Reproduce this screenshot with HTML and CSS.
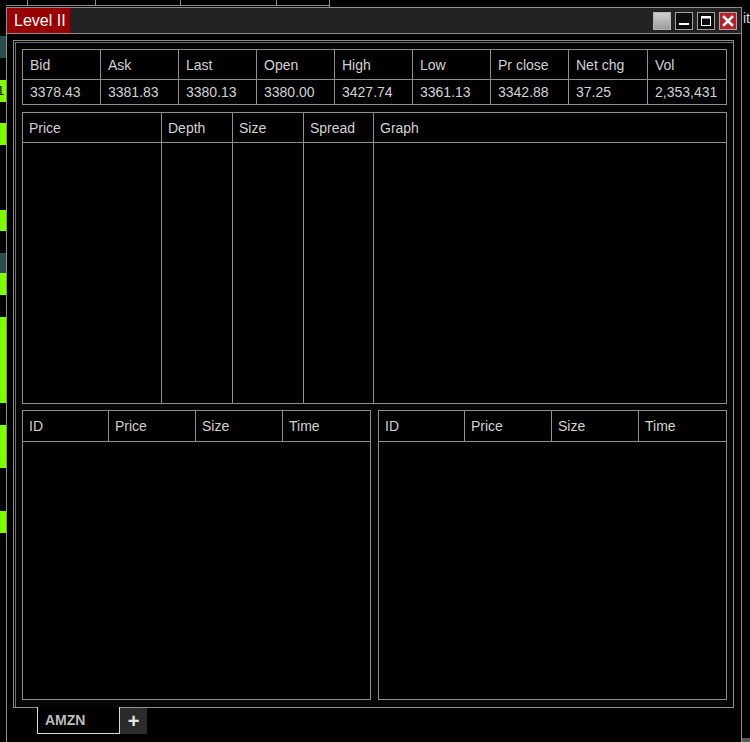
FILE: index.html
```html
<!DOCTYPE html>
<html>
<head>
<meta charset="utf-8">
<link rel="stylesheet" href="styles.css">
</head>
<body>
<div class="desk">
  <div class="bg-top">
    <div class="bg-cols">
      <div class="bg-col c1"></div>
      <div class="bg-col c2"></div>
      <div class="bg-col c3"></div>
      <div class="bg-col c4"></div>
      <div class="bg-col c5"></div>
    </div>
  </div>
  <div class="bg-left">
    <div class="blk k" style="height:36px"></div>
    <div class="blk t" style="height:22px"></div>
    <div class="blk k" style="height:22px"></div>
    <div class="blk g" style="height:22px"><span class="one">1</span></div>
    <div class="blk k" style="height:21px"></div>
    <div class="blk g" style="height:22px"></div>
    <div class="blk k" style="height:65px"></div>
    <div class="blk g" style="height:21px"></div>
    <div class="blk k" style="height:22px"></div>
    <div class="blk t" style="height:20px"></div>
    <div class="blk g" style="height:22px"></div>
    <div class="blk k" style="height:22px"></div>
    <div class="blk g" style="height:86px"></div>
    <div class="blk k" style="height:22px"></div>
    <div class="blk g" style="height:43px"></div>
    <div class="blk k" style="height:43px"></div>
    <div class="blk g" style="height:22px"></div>
  </div>
  <div class="bg-right-text">it</div>
  <div class="bg-corner"></div>

  <div class="window">
    <div class="titlebar">
      <div class="title">Level II</div>
      <div class="wbtns">
        <div class="wbtn gray"></div>
        <div class="wbtn dark">
          <svg width="16" height="16" viewBox="0 0 16 16"><rect x="3" y="10" width="10" height="2" fill="#fff"/></svg>
        </div>
        <div class="wbtn dark">
          <svg width="16" height="16" viewBox="0 0 16 16"><rect x="3.5" y="3.5" width="9" height="9" fill="none" stroke="#fff" stroke-width="1"/><rect x="3" y="3" width="10" height="2.5" fill="#fff"/></svg>
        </div>
        <div class="wbtn close">
          <svg width="16" height="16" viewBox="0 0 16 16"><path d="M4 4 L12 12 M12 4 L4 12" stroke="#fff" stroke-width="2.6" stroke-linecap="square"/></svg>
        </div>
      </div>
    </div>

    <div class="frame">
      <div class="quote">
        <div class="qc h">Bid</div><div class="qc h">Ask</div><div class="qc h">Last</div><div class="qc h">Open</div><div class="qc h">High</div><div class="qc h">Low</div><div class="qc h">Pr close</div><div class="qc h">Net chg</div><div class="qc h last">Vol</div>
        <div class="qc">3378.43</div><div class="qc">3381.83</div><div class="qc">3380.13</div><div class="qc">3380.00</div><div class="qc">3427.74</div><div class="qc">3361.13</div><div class="qc">3342.88</div><div class="qc">37.25</div><div class="qc last">2,353,431</div>
      </div>

      <div class="depth">
        <div class="dc h">Price</div><div class="dc h">Depth</div><div class="dc h">Size</div><div class="dc h">Spread</div><div class="dc h last">Graph</div>
        <div class="dc b"></div><div class="dc b"></div><div class="dc b"></div><div class="dc b"></div><div class="dc b last"></div>
      </div>

      <div class="books">
        <div class="book">
          <div class="bh">
            <div class="bc">ID</div><div class="bc">Price</div><div class="bc">Size</div><div class="bc last">Time</div>
          </div>
          <div class="bb"></div>
        </div>
        <div class="book">
          <div class="bh">
            <div class="bc">ID</div><div class="bc">Price</div><div class="bc">Size</div><div class="bc last">Time</div>
          </div>
          <div class="bb"></div>
        </div>
      </div>
    </div>

    <div class="tabs">
      <div class="tab">AMZN</div>
      <div class="plus">+</div>
    </div>
  </div>
</div>
</body>
</html>
```
FILE: styles.css
```css
html, body {
  margin: 0;
  padding: 0;
  background: #000;
  overflow: hidden;
}
.desk {
  position: relative;
  width: 750px;
  height: 742px;
  background: #000;
  font-family: "Liberation Sans", Arial, sans-serif;
  overflow: hidden;
}
.bg-top {
  height: 7px;
  width: 330px;
  border-right: 1px solid #8e8e8e;
  box-sizing: border-box;
}
.bg-cols {
  display: flex;
  height: 5px;
  border-bottom: 1px solid #8e8e8e;
}
.bg-col {
  border-right: 1px solid #8e8e8e;
}
.c1 { width: 27px; }
.c2 { width: 67px; }
.c3 { width: 84px; }
.c4 { width: 95px; }
.c5 { flex: 1; border-right: none; }
.bg-left {
  position: absolute;
  left: 0;
  top: 0;
  width: 6px;
  display: flex;
  flex-direction: column;
}
.blk { width: 6px; overflow: hidden; }
.blk.k { background: #000; }
.blk.t { background: #2f4c4c; }
.blk.g { background: #7fff00; }
.one {
  display: block;
  font-size: 13px;
  line-height: 22px;
  color: #000;
  margin-left: -3px;
}
.bg-right-text {
  position: absolute;
  left: 743px;
  top: 10px;
  font-size: 14px;
  color: #d8d8d8;
}
.bg-corner {
  position: absolute;
  left: 742px;
  top: 738px;
  width: 8px;
  height: 4px;
  background: #5a5a5a;
}

.window {
  position: absolute;
  left: 6px;
  top: 7px;
  width: 736px;
  height: 760px;
  box-sizing: border-box;
  border: 1px solid #8e8e8e;
  background: #000;
}
.titlebar {
  height: 25px;
  border-bottom: 1px solid #8e8e8e;
  background: #232323;
  display: flex;
  align-items: center;
}
.title {
  height: 25px;
  width: 63px;
  background: #990000;
  color: #fff;
  font-size: 16px;
  line-height: 25px;
  padding-left: 7px;
  box-sizing: border-box;
  white-space: nowrap;
}
.wbtns {
  margin-left: auto;
  margin-right: 4px;
  display: flex;
  gap: 4px;
}
.wbtn {
  width: 18px;
  height: 18px;
  box-sizing: border-box;
  border: 1px solid #a0a0a0;
  display: flex;
}
.wbtn svg { display: block; }
.wbtn.gray {
  background: linear-gradient(#cfcfcf, #9c9c9c);
  border-color: #b4b4b4;
}
.wbtn.dark { background: #0c0c0c; }
.wbtn.close { background: #b7202a; border-color: #a8a8a8; }

.frame {
  margin: 6px 7px 0 6px;
  height: 668px;
  box-sizing: border-box;
  border: 1px solid #8e8e8e;
  box-shadow: inset 1px 1px 0 #000, inset 2px 2px 0 #6e6e6e;
  padding: 8px 6px 7px 8px;
  display: flex;
  flex-direction: column;
  gap: 7px;
  background: #050505;
}
.quote {
  height: 56px;
  box-sizing: border-box;
  border: 1px solid #8e8e8e;
  display: grid;
  grid-template-columns: repeat(7, 78px) 79px 1fr;
  grid-template-rows: 30px 1fr;
  background: #000;
}
.qc {
  border-right: 1px solid #8e8e8e;
  color: #d2d2d2;
  font-size: 14px;
  padding-left: 7px;
  display: flex;
  align-items: center;
  white-space: nowrap;
  overflow: hidden;
}
.qc.h { border-bottom: 1px solid #8e8e8e; }
.qc.last, .dc.last, .bc.last { border-right: none; }

.depth {
  height: 292px;
  box-sizing: border-box;
  border: 1px solid #8e8e8e;
  display: grid;
  grid-template-columns: 139px 71px 71px 70px 1fr;
  grid-template-rows: 30px 1fr;
  background: #000;
  margin-bottom: -1px;
}
.dc {
  border-right: 1px solid #8e8e8e;
  color: #d2d2d2;
  font-size: 14px;
  padding-left: 6px;
}
.dc.h {
  border-bottom: 1px solid #8e8e8e;
  display: flex;
  align-items: center;
}

.books {
  flex: 1;
  display: flex;
  gap: 7px;
}
.book {
  flex: 1;
  box-sizing: border-box;
  border: 1px solid #8e8e8e;
  display: flex;
  flex-direction: column;
  background: #000;
}
.bh {
  height: 31px;
  box-sizing: border-box;
  border-bottom: 1px solid #8e8e8e;
  display: grid;
  grid-template-columns: 86px 87px 87px 1fr;
}
.bc {
  border-right: 1px solid #8e8e8e;
  color: #d2d2d2;
  font-size: 14px;
  padding-left: 6px;
  display: flex;
  align-items: center;
}
.bb { flex: 1; }

.tabs {
  display: flex;
  align-items: flex-start;
  margin-left: 30px;
}
.tab {
  margin-top: -1px;
  width: 83px;
  height: 27px;
  box-sizing: border-box;
  border: 1px solid #d8d8d8;
  border-top: none;
  background: #000;
  color: #bdbdbd;
  font-weight: bold;
  font-size: 14px;
  padding-left: 7px;
  display: flex;
  align-items: center;
}
.plus {
  width: 27px;
  height: 26px;
  background: #2b2b2b;
  color: #e6e6e6;
  font-weight: bold;
  font-size: 20px;
  display: flex;
  align-items: center;
  justify-content: center;
}
```
